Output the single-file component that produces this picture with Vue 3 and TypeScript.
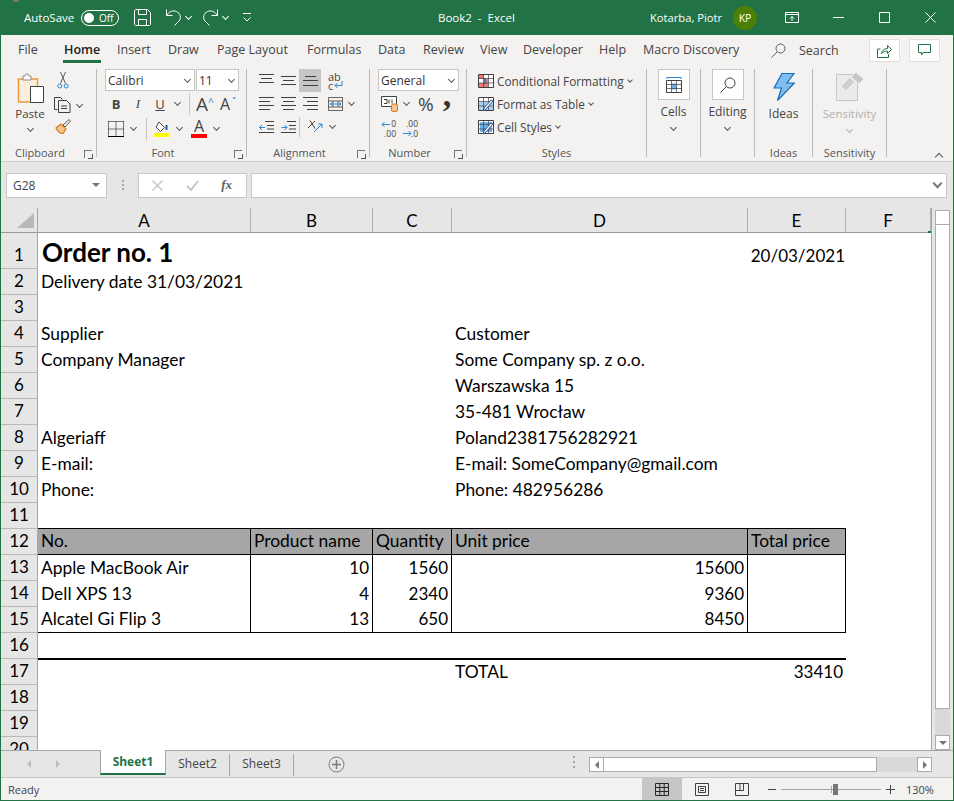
<template>
  <div class="window">
    <!-- title bar -->
    <header class="titlebar">
      <span class="autosave">AutoSave</span>
      <span class="toggle"><i class="knob"></i><span>Off</span></span>
      <svg class="qa save" width="17" height="17" viewBox="0 0 17 17" fill="none" stroke="#fff"><path d="M.5 1.500v14l1 1h14l1-1V3.500l-3-3h-12zM4.500 .5v5h8v-5M4.500 16.500v-6h8v6"/></svg>
      <svg class="qa undo" width="17" height="17" viewBox="0 0 17 17" fill="none" stroke="#fff"><path d="M1.500 .5v6h6M1.500 6.500C4 2.500 8 1 11.500 2.500c4 1.800 5 6.500 2.500 9.500l-4.500 4.500"/></svg>
      <i class="chev white c1"></i>
      <svg class="qa redo" width="17" height="17" viewBox="0 0 17 17" fill="none" stroke="#fff"><path d="M15.500 .5v6h-6M15.500 6.500C13 2.500 9 1 5.500 2.500c-4 1.800-5 6.500-2.500 9.500l4.500 4.500"/></svg>
      <i class="chev white c2"></i>
      <svg class="qa custom" width="8" height="9" viewBox="0 0 8 9" fill="none" stroke="#fff"><path d="M0 .5h8M.5 4.500 4 8l3.500-3.500"/></svg>
      <span class="doc">Book2&nbsp; - &nbsp;Excel</span>
      <span class="user">Kotarba, Piotr</span>
      <span class="avatar">KP</span>
      <svg class="winbtn display" width="14" height="11" viewBox="0 0 14 11" fill="none" stroke="#fff"><path d="M.5 .5h13v10H.5zM.5 2.500h13M7 9V4.500M5 6.500l2-2 2 2"/></svg>
      <svg class="winbtn min" width="11" height="1" viewBox="0 0 11 1"><path d="M0 .5h11" stroke="#fff"/></svg>
      <svg class="winbtn max" width="11" height="11" viewBox="0 0 11 11" fill="none" stroke="#fff"><path d="M.5 .5h10v10H.5z"/></svg>
      <svg class="winbtn close" width="11" height="11" viewBox="0 0 11 11" fill="none" stroke="#fff"><path d="M.5 .5l10 10M10.500 .5l-10 10"/></svg>
    </header>

    <!-- ribbon tabs -->
    <nav class="tabs">
      <span v-for="t in tabs" :key="t.name" class="tab" :class="{ active: t.name === 'Home' }" :style="{ width: t.w + 'px' }">{{ t.name }}</span>
      <svg class="search-ico" width="15" height="15" viewBox="0 0 15 15" fill="none" stroke="#605e5c"><circle cx="9.500" cy="5.500" r="4.500"/><path d="M6 9l-5.500 5.500"/></svg>
      <span class="search">Search</span>
      <span class="tab-btn first">
        <svg width="15" height="14" viewBox="0 0 15 14" fill="none" stroke="#217346"><path d="M3.500 5H.5v8.500h11V10M4.500 9.500C5 6.500 7 4.500 10.500 4.500V1.500l4 4-4 4V7C8 7 6 8 4.500 9.500z"/></svg>
      </span>
      <span class="tab-btn">
        <svg width="13" height="13" viewBox="0 0 13 13" fill="none" stroke="#217346"><path d="M.5 .5h12v8H5L3.500 11V8.500h-3z"/></svg>
      </span>
    </nav>

    <!-- ribbon -->
    <section class="ribbon">
      <div class="group clipboard">
        <div class="body clip-body">
          <div class="paste">
            <svg width="27" height="31" viewBox="0 0 27 31" class="paste-ico">
              <path d="M1.500 6h19v23h-19z" fill="#fbeedd" stroke="#ed9a3f" stroke-width="1.500"/>
              <path d="M6 7V3h2l1-2h2l1 2h2v4z" fill="#fff" stroke="#8a8886"/>
              <path d="M13.500 13.500h13v16h-13z" fill="#fff" stroke="#404040"/>
            </svg>
            <span>Paste</span>
            <i class="chev"></i>
          </div>
          <div class="clip-tools">
            <svg width="12" height="17" viewBox="0 0 12 17" fill="none" class="cut"><path d="M3.500 0l5 11.500M8.500 0l-5 11.500" stroke="#605e5c"/><circle cx="2.800" cy="14" r="2" stroke="#2b88d8"/><circle cx="9.200" cy="14" r="2" stroke="#2b88d8"/></svg>
            <span class="copy-row">
              <svg width="17" height="16" viewBox="0 0 17 16" fill="none" stroke="#404040"><path d="M.5 .5h6l2 2M.5 .5v12h3"/><path d="M4.500 3.500h8l3.500 3.500v8.500H4.500zM7 9h6M7 11.500h6"/></svg>
              <i class="chev"></i>
            </span>
            <svg width="16" height="15" viewBox="0 0 16 15" class="brush"><path d="M1 9l5-4 5 5-3 4.500c-3 .3-5-1.500-7-5.500z" fill="#f7c48c" stroke="#d97b1c" stroke-width="1.200"/><path d="M8 6l6-5.500 1.500 1.500L10 8z" fill="#eee" stroke="#605e5c"/></svg>
          </div>
        </div>
        <div class="label">Clipboard<i class="launch"></i></div>
      </div>

      <div class="group font">
        <div class="body">
          <div class="row selects">
            <span class="select fname">Calibri<i class="chev"></i></span>
            <span class="select fsize">11<i class="chev"></i></span>
          </div>
          <div class="row font2">
            <b class="gl w22 bold">B</b>
            <em class="gl w22 ital">I</em>
            <u class="gl w22 under">U</u>
            <i class="chev cm"></i>
            <i class="vsep s1"></i>
            <span class="gl big">A<small class="up">^</small></span>
            <span class="gl big sm">A<small class="down">ˇ</small></span>
          </div>
          <div class="row font3">
            <svg width="16" height="16" viewBox="0 0 16 16" fill="none" class="bord"><path d="M.5 .5h15M.5 8h15M8 .5v15M.5 .5v15M15.500 .5v15" stroke="#000" stroke-dasharray="1 1"/><path d="M0 15.500h16" stroke="#000"/></svg>
            <i class="chev cb"></i>
            <i class="vsep s2"></i>
            <span class="color fill">
              <svg width="16" height="11" viewBox="0 0 16 11" fill="none"><path d="M5 1l5.500 5.500-4 4L2 6z" stroke="#404040" fill="#fff"/><path d="M12.500 4v5" stroke="#2b579a" stroke-width="2"/></svg>
              <i class="swatch yellow"></i>
            </span>
            <i class="chev cf"></i>
            <span class="color text">
              <span class="fa">A</span>
              <i class="swatch red"></i>
            </span>
            <i class="chev cf2"></i>
          </div>
        </div>
        <div class="label">Font<i class="launch"></i></div>
      </div>

      <div class="group align">
        <div class="body">
          <div class="row arow">
            <span class="cell22"><svg width="15" height="11" viewBox="0 0 15 11" class="ln top"><path d="M0 .5h15M2 4.500h11M0 8.500h15" /></svg></span>
            <span class="cell22"><svg width="15" height="11" viewBox="0 0 15 11" class="ln top"><path d="M0 2.500h15M2 6.500h11M0 10.500h15" /></svg></span>
            <span class="cell22 on"><svg width="15" height="11" viewBox="0 0 15 11" class="ln bot"><path d="M2 1.500h11M0 5.500h15M0 10.500h15" /></svg></span>
            <span class="wrap"><span>ab</span><span class="wc">c<svg width="9" height="8" viewBox="0 0 9 8" fill="none" stroke="#2b88d8"><path d="M8 0v4.500H1M3.500 2 1 4.500 3.500 7"/></svg></span></span>
          </div>
          <div class="row arow">
            <span class="cell22"><svg width="15" height="13" viewBox="0 0 15 13" class="ln"><path d="M0 .5h15M0 4.500h11M0 8.500h15M0 12.500h11" /></svg></span>
            <span class="cell22"><svg width="15" height="13" viewBox="0 0 15 13" class="ln"><path d="M0 .5h15M2 4.500h11M0 8.500h15M2 12.500h11" /></svg></span>
            <span class="cell22"><svg width="15" height="13" viewBox="0 0 15 13" class="ln"><path d="M0 .5h15M4 4.500h11M0 8.500h15M4 12.500h11" /></svg></span>
            <svg width="15" height="14" viewBox="0 0 15 14" fill="none" class="merge"><path d="M.5 .5h14v13H.5zM.5 4h14M.5 10h14M5 4v6M10 4v6" stroke="#404040" stroke-width=".8"/><path d="M2 7h11M4 5.500 2 7l2 1.500M11 5.500 13 7l-2 1.500" stroke="#2b88d8" fill="none"/></svg>
            <i class="chev cm2"></i>
          </div>
          <div class="row arow">
            <span class="cell22"><svg width="15" height="12" viewBox="0 0 15 12" fill="none" class="ln"><path d="M6 .5h9M8 4.500h7M8 8h7M0 11.500h15"/><path class="blue" d="M6 6.500H.5M3 4 .5 6.500 3 9"/></svg></span>
            <span class="cell22"><svg width="15" height="12" viewBox="0 0 15 12" fill="none" class="ln"><path d="M6 .5h9M8 4.500h7M8 8h7M0 11.500h15"/><path class="blue" d="M.5 6.500H6M3.500 4 6 6.500 3.500 9"/></svg></span>
            <i class="vsep s3"></i>
            <span class="orient"><svg width="16" height="15" viewBox="0 0 16 15" fill="none"><path d="M1 9l7-7M3 1.500l5 8" stroke="#404040"/><path d="M7 13l8-8M11 5h4v4" stroke="#2b88d8"/></svg></span>
            <i class="chev cm3"></i>
          </div>
        </div>
        <div class="label">Alignment<i class="launch"></i></div>
      </div>

      <div class="group number">
        <div class="body">
          <div class="row selects">
            <span class="select nfmt">General<i class="chev"></i></span>
          </div>
          <div class="row num2">
            <svg width="17" height="16" viewBox="0 0 17 16" class="acct"><path d="M.5 .5h15v10H.5z" fill="#fff" stroke="#404040"/><path d="M3 3.500h3v4H3M8 3.500v4M11 3.500v4" stroke="#404040" fill="none"/><rect x="10.500" y="8" width="6" height="7.500" rx="1.500" fill="#f7c48c" stroke="#d97b1c"/></svg>
            <i class="chev ca"></i>
            <span class="pct">%</span>
            <span class="comma">,</span>
          </div>
          <div class="row num3">
            <span class="dec"><svg width="9" height="7" viewBox="0 0 9 7" fill="none" stroke="#2b88d8"><path d="M9 3.500H1M3.500 1 1 3.500 3.500 6"/></svg><span class="d1">0</span><span class="d2">.00</span></span>
            <span class="dec"><span class="d3">.00</span><svg width="9" height="7" viewBox="0 0 9 7" fill="none" stroke="#2b88d8"><path d="M0 3.500h8M5.500 1 8 3.500 5.500 6"/></svg><span class="d1">.0</span></span>
          </div>
        </div>
        <div class="label">Number<i class="launch"></i></div>
      </div>

      <div class="group styles">
        <div class="body">
          <div v-for="s in styleCmds" :key="s.name" class="style-row">
            <svg width="16" height="14" viewBox="0 0 16 14" fill="none">
              <path d="M.5 .5h15v13H.5z" fill="#fff" stroke="#404040"/>
              <path v-if="s.kind === 'cond'" d="M1 1h5v4H1zM6 5h4v4H6zM1 9h9v4H1z" fill="#f2777d"/>
              <path v-if="s.kind === 'cond'" d="M6 4h2v6H6z" fill="#2b88d8"/>
              <path v-if="s.kind === 'table'" d="M1 5h14v8H1z" fill="#a9d1f0"/>
              <path v-if="s.kind === 'cell'" d="M2 2h12v10H2z" fill="#6fb1e8"/>
              <path d="M.5 4.500h15M.5 9h15M5.500 .5v13M10.500 .5v13" stroke="#404040" stroke-width=".7"/>
              <path v-if="s.kind !== 'cond'" d="M5 14l3-2 7-8-2-1-7 8z" fill="#fff" stroke="#2b579a"/>
            </svg>
            <span>{{ s.name }}</span>
            <i v-if="s.kind" class="chev"></i>
          </div>
        </div>
        <div class="label">Styles</div>
      </div>

      <div class="group cells">
        <div class="big-btn">
          <svg width="16" height="16" viewBox="0 0 16 16" fill="none"><path d="M1 .5h14M1 0v2M15 0v2" stroke="#2b88d8"/><path d="M.5 3.500h15v12H.5z" stroke="#404040"/><path d="M5.500 6.500h5v6h-5z" fill="#6fb1e8"/><path d="M.5 7.500h15M.5 11.500h15M5.500 3.500v12M10.500 3.500v12" stroke="#404040" stroke-width=".7"/></svg>
        </div>
        <span class="cmd">Cells</span>
        <i class="chev"></i>
      </div>

      <div class="group editing">
        <div class="big-btn">
          <svg width="16" height="16" viewBox="0 0 16 16" fill="none" stroke="#404040"><circle cx="10" cy="6" r="5"/><path d="M6.500 9.500l-6 6"/></svg>
        </div>
        <span class="cmd">Editing</span>
        <i class="chev"></i>
      </div>

      <div class="group ideas">
        <svg width="22" height="28" viewBox="0 0 22 28" class="bolt"><path d="M9 .5h12L14 10h7.500L4.500 27.500 8.500 15H1z" fill="#83bcee" stroke="#106ebe" stroke-width="1.200"/></svg>
        <span class="cmd">Ideas</span>
        <div class="label">Ideas</div>
      </div>

      <div class="group sens">
        <svg width="29" height="30" viewBox="0 0 29 30" class="sens-ico"><path d="M.5 3.500h21v26H.5z" fill="#ebebeb" stroke="#c8c6c4"/><path d="M5 15l9-9 5 5-9 9z" fill="#d2d0ce" stroke="#f3f2f1"/><path d="M15 6l5-5 8 7-5 5z" fill="#c8c6c4" stroke="#f3f2f1"/></svg>
        <span class="cmd dis">Sensitivity</span>
        <i class="chev dim"></i>
        <div class="label">Sensitivity</div>
      </div>

      <i class="chev collapse"></i>
    </section>

    <!-- formula bar -->
    <div class="formula">
      <span class="namebox">G28<i class="tri"></i></span>
      <span class="dots"><i></i><i></i><i></i></span>
      <span class="fx-btns">
        <svg width="11" height="11" viewBox="0 0 11 11" fill="none" stroke="#c8c6c4" stroke-width="1.500"><path d="M.5 .5l10 10M10.500 .5l-10 10"/></svg>
        <svg width="13" height="11" viewBox="0 0 13 11" fill="none" stroke="#c8c6c4" stroke-width="2"><path d="M1 6l4 4 7-9"/></svg>
        <em>fx</em>
      </span>
      <span class="fx-input"><i class="chev"></i></span>
    </div>

    <!-- sheet -->
    <div class="sheet-wrap">
      <div class="sheet">
        <div class="corner"><i></i></div>
        <div v-for="c in columns" :key="c" class="colhead">{{ c }}</div>
        <template v-for="(row, r) in sheet" :key="r">
          <div class="rowhead">{{ r + 1 }}</div>
          <div v-for="(v, c) in row" :key="c" class="cell" :class="cellClass(r + 1, c, v)">{{ v }}</div>
        </template>
      </div>
      <div class="vscroll">
        <span class="sbtn"><i class="tri up"></i></span>
        <span class="vthumb"></span>
        <span class="vtrack"></span>
        <span class="sbtn"><i class="tri"></i></span>
      </div>
    </div>

    <!-- sheet tabs -->
    <div class="sheetbar">
      <i class="nav left"></i>
      <i class="nav right"></i>
      <span class="stab current">Sheet1</span>
      <span class="stab">Sheet2</span>
      <span class="stab last">Sheet3</span>
      <svg class="add" width="17" height="17" viewBox="0 0 17 17" fill="none" stroke="#7a7a7a"><circle cx="8.500" cy="8.500" r="7.500"/><path d="M8.500 4v9M4 8.500h9" stroke-width="1.500"/></svg>
      <span class="dots sheetdots"><i></i><i></i><i></i></span>
      <div class="hscroll">
        <span class="hbtn"><i class="tri lft"></i></span>
        <span class="hthumb"></span>
        <span class="htrack"></span>
        <span class="hbtn"><i class="tri rgt"></i></span>
      </div>
    </div>

    <!-- status bar -->
    <footer class="status">
      <span class="ready">Ready</span>
      <span class="view on">
        <svg width="14" height="13" viewBox="0 0 14 13" fill="none" stroke="#262626"><path d="M.5 .5h13v12H.5zM.5 4.500h13M.5 8.500h13M4.800 .5v12M9.200 .5v12"/></svg>
      </span>
      <span class="view">
        <svg width="14" height="13" viewBox="0 0 14 13" fill="none" stroke="#404040"><path d="M.5 .5h13v12H.5zM3.500 3.500h7v6h-7zM5 5.500h4M5 7.500h4"/></svg>
      </span>
      <span class="view">
        <svg width="14" height="13" viewBox="0 0 14 13" fill="none" stroke="#404040"><path d="M.5 .5h13v12H.5zM.5 7.500h8v-7M5 .5v7"/></svg>
      </span>
      <i class="zoom-minus"></i>
      <span class="slider"><i class="tick"></i><i class="sthumb"></i></span>
      <i class="zoom-plus"></i>
      <span class="pctval">130%</span>
    </footer>
  </div>
</template>

<script setup lang="ts">
type Value = string | number | null;

const tabs = [
  { name: "File", w: 46 },
  { name: "Home", w: 53 },
  { name: "Insert", w: 51 },
  { name: "Draw", w: 49 },
  { name: "Page Layout", w: 90 },
  { name: "Formulas", w: 71 },
  { name: "Data", w: 45 },
  { name: "Review", w: 57 },
  { name: "View", w: 43 },
  { name: "Developer", w: 76 },
  { name: "Help", w: 44 },
  { name: "Macro Discovery", w: 128 },
];

const styleCmds = [
  { name: "Conditional Formatting", kind: "cond" },
  { name: "Format as Table", kind: "table" },
  { name: "Cell Styles", kind: "cell" },
];

const columns = ["A", "B", "C", "D", "E", "F"];

const blank = (): Value[] => [null, null, null, null, null, null];
const left = (a: string | null, d: string | null = null): Value[] => [a, null, null, d, null, null];

const sheet: Value[][] = [
  ["Order no. 1", null, null, null, "20/03/2021", null],
  left("Delivery date 31/03/2021"),
  blank(),
  left("Supplier", "Customer"),
  left("Company Manager", "Some Company sp. z o.o."),
  left(null, "Warszawska 15"),
  left(null, "35-481 Wrocław"),
  left("Algeriaff", "Poland2381756282921"),
  left("E-mail:", "E-mail: SomeCompany@gmail.com"),
  left("Phone:", "Phone: 482956286"),
  blank(),
  ["No.", "Product name", "Quantity", "Unit price", "Total price", null],
  ["Apple MacBook Air", 10, 1560, 15600, null, null],
  ["Dell XPS 13", 4, 2340, 9360, null, null],
  ["Alcatel Gi Flip 3", 13, 650, 8450, null, null],
  blank(),
  [null, null, null, "TOTAL", 33410, null],
  blank(),
  blank(),
  blank(),
];

const cellClass = (r: number, c: number, v: Value) => ({
  num: typeof v === "number",
  title: r === 1 && c === 0,
  date: r === 1 && c === 4,
  boxed: r >= 12 && r <= 15 && c < 5,
  head: r === 12 && c < 5,
  rule: [11, 12, 15, 16].includes(r) && c < 5,
  thick: r === 17 && c < 5,
});
</script>

<style>
html,
body {
  margin: 0;
  background: #e6e6e6;
}
</style>

<style scoped>
.window {
  width: 954px;
  height: 801px;
  box-sizing: border-box;
  border: 1px solid #217346;
  border-top: 0;
  background: #f3f2f1;
  font-family: "Open Sans", "Noto Sans", sans-serif;
  font-size: 12px;
  color: #444;
  overflow: hidden;
}

i {
  display: block;
  font-style: normal;
}

svg {
  display: block;
  flex: none;
}

.chev {
  width: 4px;
  height: 4px;
  border-right: 1px solid #555;
  border-bottom: 1px solid #555;
  transform: rotate(45deg);
  flex: none;
}

.chev.white {
  border-color: #fff;
}

/* title bar */
.titlebar {
  height: 35px;
  margin: 0 -1px;
  background: #217346;
  color: #fff;
  display: flex;
  align-items: center;
  font-size: 11.500px;
}

.autosave {
  margin-left: 24px;
  width: 57px;
}

.toggle {
  width: 38px;
  height: 16px;
  box-sizing: border-box;
  border: 1px solid #fff;
  border-radius: 8px;
  display: flex;
  align-items: center;
  font-size: 10px;
}

.knob {
  width: 10px;
  height: 10px;
  background: #fff;
  border-radius: 50%;
  margin: 0 5px 0 2px;
}

.save {
  margin-left: 15px;
}

.undo {
  margin-left: 14px;
}

.c1 {
  margin: -2px 0 0 4px;
}

.redo {
  margin-left: 11px;
}

.c2 {
  margin: -2px 0 0 4px;
}

.custom {
  margin-left: 15px;
}

.doc {
  margin-left: 187px;
  width: 212px;
}

.user {
  width: 83px;
  font-size: 11.200px;
}

.avatar {
  width: 24px;
  height: 24px;
  border-radius: 50%;
  background: #4c7f06;
  font-size: 10.500px;
  display: flex;
  align-items: center;
  justify-content: center;
}

.display {
  margin-left: 28px;
}

.min {
  margin-left: 34px;
}

.max {
  margin-left: 35px;
}

.close {
  margin-left: 35px;
}

/* tabs */
.tabs {
  height: 28px;
  display: flex;
  align-items: center;
  padding-left: 17px;
  font-size: 12.500px;
  color: #444;
}

.tab {
  flex: none;
  height: 28px;
  line-height: 30px;
  box-sizing: border-box;
  position: relative;
}

.tab.active {
  color: #222;
  font-weight: 600;
}

.tab.active::after {
  content: "";
  position: absolute;
  left: -1px;
  width: 38px;
  top: 25px;
  height: 2.500px;
  background: #217346;
}

.search-ico {
  margin: 2px 0 0 0;
}

.search {
  margin: 2px 0 0 13px;
  width: 70px;
  flex: none;
}

.tab-btn {
  flex: none;
  width: 31px;
  height: 23px;
  margin-top: 3px;
  margin-left: 9px;
  box-sizing: border-box;
  background: #fff;
  border: 1px solid #e1dfdd;
  border-radius: 2px;
  display: flex;
  align-items: center;
  justify-content: center;
}

.tab-btn.first {
  margin-left: 0;
}

/* ribbon */
.ribbon {
  height: 99px;
  box-sizing: border-box;
  padding-top: 6px;
  border-bottom: 1px solid #d2d0ce;
  display: flex;
  align-items: flex-start;
}

.group {
  position: relative;
  flex: none;
  height: 88px;
  box-sizing: border-box;
  border-right: 1px solid #bdbbb9;
  display: flex;
  flex-direction: column;
}

.label {
  position: absolute;
  left: 0;
  right: 0;
  bottom: -3px;
  height: 14px;
  line-height: 14px;
  text-align: center;
  font-size: 11px;
  color: #555;
}

.clipboard .label,
.font .label,
.align .label,
.number .label {
  padding-right: 17px;
}

.launch {
  position: absolute;
  right: 4px;
  bottom: 2px;
  width: 7px;
  height: 7px;
  border-left: 1px solid #777;
  border-top: 1px solid #777;
}

.launch::after {
  content: "";
  position: absolute;
  right: -1px;
  bottom: -1px;
  width: 4px;
  height: 4px;
  border-right: 1px solid #555;
  border-bottom: 1px solid #555;
}

.clipboard {
  width: 96px;
}

.font {
  width: 150px;
}

.align {
  width: 123px;
}

.number {
  width: 97px;
}

.styles {
  width: 180px;
}

.cells,
.editing {
  width: 54px;
  align-items: center;
}

.ideas {
  width: 58px;
  align-items: center;
}

.sens {
  width: 74px;
  align-items: center;
}

.clip-body {
  display: flex;
}

.paste {
  width: 44px;
  margin-left: 7px;
  display: flex;
  flex-direction: column;
  align-items: center;
  font-size: 11.500px;
}

.paste-ico {
  margin-top: 4px;
}

.paste span {
  margin-top: 1px;
  line-height: 18px;
}

.paste .chev {
  margin-top: 3px;
}

.clip-tools {
  margin-left: 2px;
  display: flex;
  flex-direction: column;
  padding-top: 3px;
}

.cut {
  margin-left: 3px;
}

.copy-row {
  display: flex;
  align-items: center;
  margin-top: 8px;
}

.copy-row .chev {
  margin: -2px 0 0 6px;
}

.brush {
  margin: 6px 0 0 1px;
}

.row {
  display: flex;
  align-items: center;
}

.select {
  height: 22px;
  box-sizing: border-box;
  background: #fff;
  border: 1px solid #c8c6c4;
  display: flex;
  align-items: center;
  justify-content: space-between;
  padding: 0 4px 0 2px;
  font-size: 12px;
  color: #333;
}

.fname {
  margin-left: 8px;
  width: 90px;
}

.fsize {
  margin-left: 1px;
  width: 43px;
}

.nfmt {
  margin-left: 8px;
  width: 81px;
}

.select .chev {
  margin-top: -2px;
}

.font2 {
  height: 23px;
  margin-top: 1px;
  padding-left: 8px;
  color: #444;
}

.gl {
  font-family: "Open Sans", sans-serif;
  display: block;
  text-align: center;
  line-height: 22px;
}

.w22 {
  width: 22px;
  flex: none;
}

.bold {
  font-size: 13px;
}

.ital {
  font-size: 13px;
  font-family: "Liberation Serif", serif;
}

.under {
  font-size: 13px;
  text-underline-offset: 1px;
}

.cm {
  margin: -2px 0 0 4px;
}

.vsep {
  width: 1px;
  background: #c8c6c4;
}

.s1 {
  height: 22px;
  margin-left: 9px;
}

.big {
  position: relative;
  font-size: 19px;
  margin-left: 6px;
  width: 22px;
  text-align: left;
}

.big.sm {
  font-size: 16px;
  margin-left: 2px;
}

.up,
.down {
  position: absolute;
  left: 12px;
  top: -2px;
  font-size: 10px;
  color: #2b88d8;
}

.font3 {
  height: 23px;
  margin-top: 2px;
  padding-left: 11px;
}

.cb {
  margin: -2px 0 0 7px;
}

.s2 {
  height: 22px;
  margin-left: 10px;
}

.color {
  width: 16px;
  display: flex;
  flex-direction: column;
  align-items: center;
}

.fill {
  margin-left: 7px;
}

.swatch {
  width: 16px;
  height: 4px;
  margin-top: 1px;
}

.yellow {
  background: #ffff00;
}

.red {
  background: #ff0000;
}

.cf {
  margin: -2px 0 0 7px;
}

.text {
  margin-left: 9px;
}

.fa {
  font-size: 16px;
  line-height: 13px;
}

.cf2 {
  margin: -2px 0 0 7px;
}

.arow {
  height: 23px;
  padding-left: 8px;
}

.cell22 {
  flex: none;
  width: 22px;
  height: 23px;
  display: flex;
  align-items: center;
  justify-content: center;
}

.cell22.on {
  background: #c8c6c4;
}

.ln {
  stroke: #404040;
  fill: none;
}

.top {
  margin-top: -3px;
}

.blue {
  stroke: #2b88d8;
}

.wrap {
  margin-left: 7px;
  display: flex;
  flex-direction: column;
  font-size: 11px;
  line-height: 9px;
  color: #444;
}

.wc {
  display: flex;
  align-items: center;
  gap: 1px;
}

.merge {
  margin-left: 7px;
}

.cm2 {
  margin: -2px 0 0 6px;
}

.s3 {
  height: 20px;
}

.orient {
  margin-left: 7px;
}

.cm3 {
  margin: -2px 0 0 7px;
}

.num2 {
  height: 23px;
  margin-top: 1px;
  padding-left: 11px;
}

.ca {
  margin: -2px 0 0 6px;
}

.pct {
  margin-left: 9px;
  font-size: 19px;
  line-height: 20px;
}

.comma {
  margin-left: 9px;
  font-family: "Liberation Serif", serif;
  font-weight: bold;
  font-size: 34px;
  line-height: 18px;
  margin-top: -18px;
  color: #333;
}

.num3 {
  height: 23px;
  margin-top: 2px;
  padding-left: 11px;
  gap: 7px;
}

.dec {
  position: relative;
  width: 15px;
  height: 18px;
  font-size: 8.500px;
  line-height: 8px;
  color: #444;
}

.dec svg {
  position: absolute;
  left: 0;
  top: 1px;
}

.d1 {
  position: absolute;
  right: 0;
  top: 0;
}

.d2 {
  position: absolute;
  right: 0;
  bottom: 0;
}

.d3 {
  position: absolute;
  right: 0;
  top: 0;
}

.dec:last-child svg {
  top: 10px;
}

.dec:last-child .d1 {
  top: 10px;
}

.style-row {
  height: 23px;
  padding-left: 11px;
  display: flex;
  align-items: center;
  color: #444;
  font-size: 11.800px;
}

.style-row span {
  margin-left: 3px;
}

.style-row .chev {
  margin: -2px 0 0 4px;
  width: 3px;
  height: 3px;
}

.big-btn {
  width: 32px;
  height: 31px;
  box-sizing: border-box;
  background: #fff;
  border: 1px solid #c8c6c4;
  display: flex;
  align-items: center;
  justify-content: center;
}

.cmd {
  line-height: 18px;
  margin-top: 3px;
}

.cells .chev,
.editing .chev {
  margin-top: 4px;
}

.bolt {
  margin-top: 4px;
}

.ideas .cmd,
.sens .cmd {
  margin-top: 4px;
}

.sens .cmd {
  font-size: 11.500px;
}

.sens-ico {
  margin-top: 2px;
  margin-left: 2px;
}

.dis {
  color: #b3b0ad;
}

.dim {
  border-color: #b3b0ad;
  margin-top: 4px;
}

.collapse {
  margin: 85px 0 0 49px;
  transform: rotate(225deg);
  width: 5px;
  height: 5px;
}

/* formula bar */
.formula {
  height: 46px;
  background: #e6e6e6;
  display: flex;
  align-items: center;
  box-sizing: border-box;
  padding: 0 5px;
  margin-top: 0;
}

.namebox {
  width: 101px;
  height: 25px;
  box-sizing: border-box;
  background: #fff;
  border: 1px solid #c8c6c4;
  display: flex;
  align-items: center;
  justify-content: space-between;
  padding: 0 6px;
  color: #444;
}

.tri {
  width: 0;
  height: 0;
  border-left: 4px solid transparent;
  border-right: 4px solid transparent;
  border-top: 4px solid #777;
}

.tri.up {
  border-top: 0;
  border-bottom: 4px solid #777;
}

.tri.lft {
  border: 4px solid transparent;
  border-left: 0;
  border-right: 4px solid #777;
}

.tri.rgt {
  border: 4px solid transparent;
  border-right: 0;
  border-left: 4px solid #777;
}

.dots {
  width: 31px;
  display: flex;
  flex-direction: column;
  align-items: center;
  gap: 2px;
}

.dots i {
  width: 2px;
  height: 2px;
  background: #a6a6a6;
}

.fx-btns {
  width: 109px;
  height: 25px;
  box-sizing: border-box;
  background: #fff;
  border: 1px solid #c8c6c4;
  display: flex;
  align-items: center;
  justify-content: space-between;
  padding: 0 14px 0 13px;
}

.fx-btns em {
  font-family: "Liberation Serif", serif;
  font-size: 13px;
  font-weight: bold;
  color: #605e5c;
}

.fx-input {
  margin-left: 4px;
  width: 696px;
  height: 25px;
  box-sizing: border-box;
  background: #fff;
  border: 1px solid #c8c6c4;
  display: flex;
  align-items: center;
  justify-content: flex-end;
  padding-right: 5px;
}

.fx-input .chev {
  margin-top: -3px;
  width: 5px;
  height: 5px;
  border-color: #777;
  border-width: 0 2px 2px 0;
}

/* sheet */
.sheet-wrap {
  height: 542px;
  background: #e6e6e6;
  display: flex;
  font-family: Lato, "Liberation Sans", sans-serif;
}

.sheet {
  width: 931px;
  height: 542px;
  box-sizing: border-box;
  border-right: 1px solid #a6a6a6;
  background: #fff;
  overflow: hidden;
  display: grid;
  grid-template-columns: 37px 213px 122px 79px 296px 98px 85px;
  grid-template-rows: 25px 36px repeat(19, 26px);
  font-size: 17.400px;
  color: #000;
}

.corner {
  background: #e6e6e6;
  border-right: 1px solid #a6a6a6;
  border-bottom: 1px solid #9a9a9a;
  position: relative;
}

.corner i {
  position: absolute;
  left: 16px;
  top: 5px;
  width: 0;
  height: 0;
  border-left: 17px solid transparent;
  border-bottom: 15px solid #b8b8b8;
}

.colhead {
  position: relative;
  background: #e6e6e6;
  border-right: 1px solid #b0b0b0;
  border-bottom: 1px solid #9a9a9a;
  text-align: center;
  line-height: 26px;
  font-size: 17px;
}

.colhead:nth-child(7)::after {
  content: "";
  position: absolute;
  right: -1px;
  bottom: -1px;
  width: 3px;
  height: 2px;
  background: #217346;
}

.rowhead {
  background: #e6e6e6;
  border-right: 1px solid #a6a6a6;
  border-bottom: 1px solid #b8b8b8;
  display: flex;
  align-items: flex-end;
  justify-content: center;
  line-height: 26px;
  font-size: 17px;
}

.cell {
  box-sizing: border-box;
  padding: 0 3px;
  line-height: 26px;
  white-space: nowrap;
  display: flex;
  align-items: flex-end;
}

.num {
  justify-content: flex-end;
  font-size: 17px;
}

.title {
  font-size: 26px;
  font-weight: bold;
  line-height: 33px;
  padding-left: 4px;
}

.date {
  padding: 0 1px 0 0;
  justify-content: flex-end;
  font-size: 17px;
}

.boxed {
  border-right: 1px solid #000;
}

.head {
  background: #a6a6a6;
}

.rule {
  border-bottom: 1px solid #000;
}

.thick {
  border-top: 1px solid #000;
}

.vscroll {
  margin-left: 3px;
  padding-top: 2px;
  width: 15px;
  display: flex;
  flex-direction: column;
  background: #e6e6e6;
}

.sbtn {
  flex: none;
  height: 15px;
  box-sizing: border-box;
  background: #fff;
  border: 1px solid #ababab;
  display: flex;
  align-items: center;
  justify-content: center;
}

.vthumb {
  flex: none;
  height: 484px;
  box-sizing: border-box;
  background: #fff;
  border: 1px solid #ababab;
  border-top: 0;
}

.vtrack {
  flex: 1;
  background: #d9d9d9;
}

/* sheet tabs */
.sheetbar {
  height: 28px;
  box-sizing: border-box;
  background: #e6e6e6;
  border-top: 1px solid #a6a6a6;
  border-bottom: 1px solid #c8c6c4;
  display: flex;
  align-items: flex-start;
}

.nav {
  width: 0;
  height: 0;
  margin-top: 9px;
  border: 4px solid transparent;
}

.nav.left {
  margin-left: 26px;
  border-left: 0;
  border-right: 4px solid #bdbdbd;
}

.nav.right {
  margin-left: 25px;
  border-right: 0;
  border-left: 4px solid #bdbdbd;
}

.stab {
  flex: none;
  width: 64px;
  height: 22px;
  margin-top: 3px;
  box-sizing: border-box;
  border-right: 1px solid #a6a6a6;
  text-align: center;
  line-height: 20px;
  color: #444;
}

.stab.current {
  width: 66px;
  height: 25px;
  margin: -1px 0 0 40px;
  background: #fff;
  border: 1px solid #a6a6a6;
  border-top: 0;
  border-bottom: 2px solid #217346;
  color: #217346;
  font-weight: bold;
  line-height: 24px;
}

.add {
  margin: 5px 0 0 34px;
}

.sheetdots {
  width: 4px;
  margin: 5px 0 0 227px;
  gap: 3px;
}

.hscroll {
  width: 343px;
  height: 15px;
  margin: 6px 0 0 13px;
  display: flex;
}

.hbtn {
  flex: none;
  width: 15px;
  height: 15px;
  box-sizing: border-box;
  background: #fff;
  border: 1px solid #ababab;
  display: flex;
  align-items: center;
  justify-content: center;
}

.hthumb {
  flex: none;
  width: 273px;
  box-sizing: border-box;
  background: #fff;
  border: 1px solid #ababab;
  border-left: 0;
}

.htrack {
  flex: 1;
  background: #d9d9d9;
}

/* status bar */
.status {
  height: 22px;
  display: flex;
  align-items: center;
  font-size: 11px;
  color: #444;
}

.ready {
  margin-left: 7px;
  width: 634px;
}

.view {
  flex: none;
  width: 40px;
  height: 22px;
  display: flex;
  align-items: center;
  justify-content: center;
}

.view.on {
  background: #c8c6c4;
}

.zoom-minus {
  width: 8px;
  height: 1px;
  background: #444;
  margin-left: 6px;
}

.slider {
  position: relative;
  flex: none;
  width: 100px;
  height: 1px;
  margin-left: 5px;
  background: #a6a6a6;
}

.tick {
  position: absolute;
  left: 50px;
  top: -3px;
  width: 1px;
  height: 7px;
  background: #a6a6a6;
}

.sthumb {
  position: absolute;
  left: 52px;
  top: -5px;
  width: 5px;
  height: 11px;
  background: #767676;
}

.zoom-plus {
  position: relative;
  width: 9px;
  height: 1px;
  margin-left: 5px;
  background: #444;
}

.zoom-plus::after {
  content: "";
  position: absolute;
  left: 4px;
  top: -4px;
  width: 1px;
  height: 9px;
  background: #444;
}

.pctval {
  margin-left: 11px;
}
</style>
